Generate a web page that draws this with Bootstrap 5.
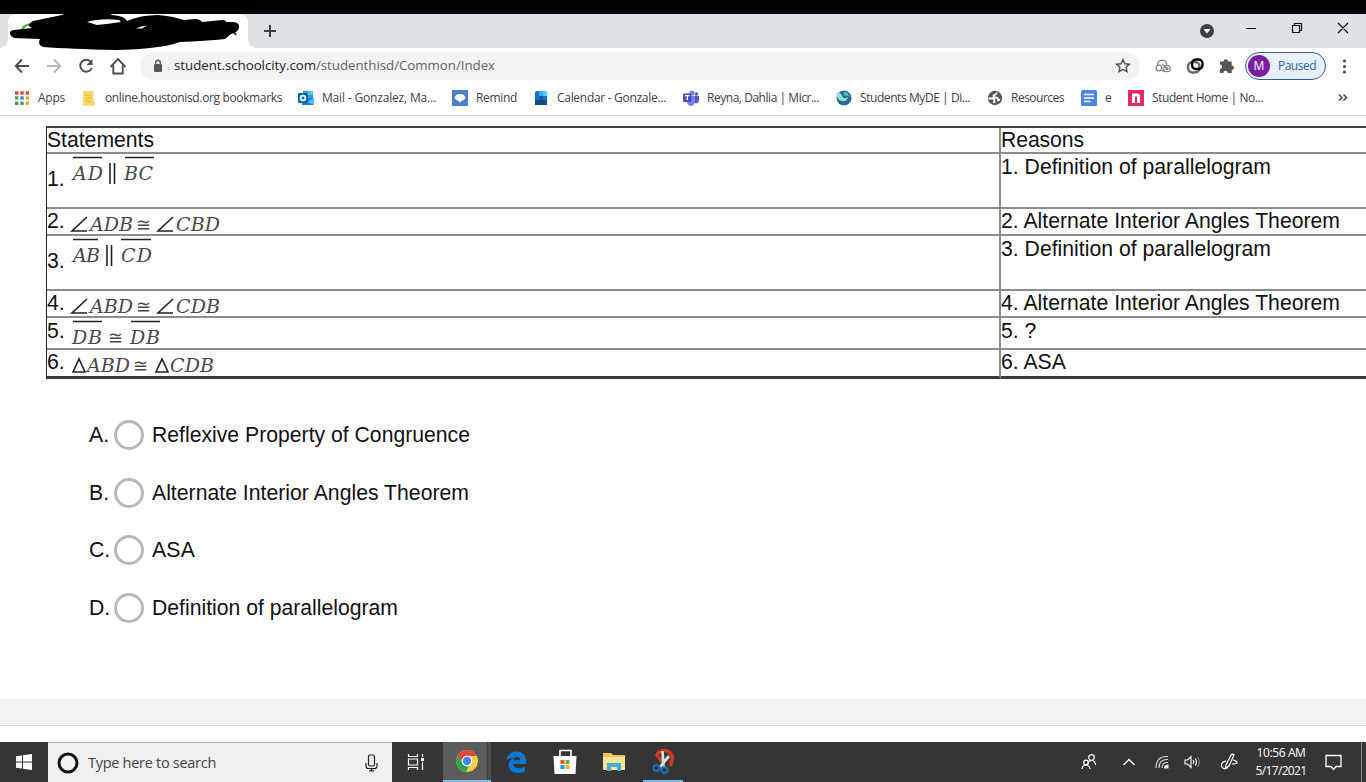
<!DOCTYPE html>
<html lang="en">
<head>
<meta charset="utf-8">
<title>Student Assessment</title>
<link href="https://cdn.jsdelivr.net/npm/bootstrap@5.3.0/dist/css/bootstrap.min.css" rel="stylesheet">
<style>
body{width:1366px;height:782px;overflow:hidden;background:#fff;font-family:"Open Sans","Noto Sans",sans-serif;color:#3c4043}
svg{display:block;flex:none}
[data-w]{white-space:nowrap;display:inline-block}
.topband{height:14px;background:#000}
.tabstrip{height:34px;background:#dee1e6}
.tab-active{width:240px;height:34px;margin-left:8px;background:#fff;border-radius:8px 8px 0 0}
.tab-active::before,.tab-active::after{content:"";position:absolute;bottom:0;width:8px;height:8px}
.tab-active::before{left:-8px;background:radial-gradient(circle at 0 0,transparent 7.5px,#fff 8px)}
.tab-active::after{right:-8px;background:radial-gradient(circle at 100% 0,transparent 7.5px,#fff 8px)}
.scribble{position:absolute;left:-8px;top:-4px;z-index:2}
.tools{height:36px}
.omni{width:1000px;height:28px;border-radius:14px;background:#f1f3f4;font-size:13.3px;margin-left:12px}
.host{color:#202124}.path{color:#5f6368}
.profile{width:81px;height:28px;border:1px solid #33609f;border-radius:14px;background:#e8f0fe;color:#2f62ad;font-size:12px}
.avatar{width:22px;height:22px;border-radius:50%;background:#7b1fa2;color:#fff;font-size:12px;margin-left:2px;margin-right:8px}
.marks{height:32px;border-bottom:1px solid #d5d7da;font-size:12px;padding-left:14px}
.bm{height:27px;gap:8px;line-height:16px}
.bm svg{width:16px;height:16px}
.page{height:583px;padding-top:10px;font-family:"Liberation Sans",Arial,sans-serif;font-size:21.2px;color:#111}
.proof{width:1340px;margin-left:46px;table-layout:fixed;border-collapse:separate;border-spacing:0;border-left:1px solid #222;border-top:2px solid #444}
.proof td{padding:0;border-bottom:2px solid #8c8c8c;vertical-align:top;line-height:25px;height:27px}
.proof td:first-child{border-right:2px solid #8c8c8c}
.proof tr:last-child td{border-bottom:3px solid #3a3a3a}
.proof .r1 td{height:26px;line-height:24px}.proof .r2 td{height:55px}.proof .r3 td{height:27px;line-height:23px}.proof .r4 td{height:32px}.proof .r5 td{height:29px;line-height:23px}
.num{width:24px;flex:none}
.r2 .num{padding-top:12px}
.math{font-family:"DejaVu Serif","Liberation Serif",serif;font-style:italic;font-size:19px;fill:#484848;overflow:visible}
.math .sym{font-family:"DejaVu Sans",sans-serif;font-style:normal;font-size:18px}
.math path{stroke:#222;stroke-width:1.6;fill:none}
.choices{padding-left:89px;padding-top:27px}
.choice{height:57.7px}
.letter{width:25px}
.choice .form-check-input{width:30px;height:30px;border:3px solid #b9b9b9;margin:0 8px 0 0;float:none;background:#fff}
.footband{height:27px;background:#f3f3f3;border-bottom:1px solid #dadada}
.gap-white{height:16px}
.taskbar{height:40px;background:#353535;color:#fff}
.taskbar .seg{height:40px;display:flex;align-items:center;justify-content:center;flex:none}
.searchbox{width:344px;height:40px;background:#f0f0f0;border-top:1px solid #b5b5b5;color:#444;font-size:14.5px}
.chrome-on{width:48px;margin-left:3px;background:linear-gradient(90deg,#5c5c5c 44px,#3e3e3e 44px,#3e3e3e 45px,#505050 45px);border-bottom:2px solid #76b9ed}
.snip-on{position:relative}
.snip-on::after{content:"";position:absolute;left:4px;right:4px;bottom:0;height:2px;background:#76b9ed}
.clock{font-size:12px;line-height:18px}
</style>
</head>
<body>
<div class="topband"></div>
<header>
 <div class="tabstrip d-flex">
  <div class="tab-active position-relative">
   <svg class="scribble" width="256" height="40" viewBox="0 10 256 40"><path d="M22 32c0-5 4-8 9-7" stroke="#58b947" stroke-width="2.5" fill="none"/><path d="M233 31l3 4" stroke="#333" stroke-width="2"/>
    <path d="M14 30L32 28Q25 25 33 21L62 15L68 12L108 12L112 15Q125 16 127 21Q140 15 158 15Q172 16 184 20L195 19Q200 19 202 22L222 20Q226 20 226 22L234 22Q240 23 239 28Q238 32 231 34L225 39Q205 41 180 42Q160 49 115 50Q70 49 43 47Q37 44 40 39L14 38Q9 35 10 32Q11 30 14 30Z" fill="#000"/>
    <path d="M87 22Q100 18 119 20L121 22Q108 24 97 25Z" fill="#fff"/><path d="M136 28.500Q141 26 147 25.500L142 28.500Z" fill="#fff"/></svg>
  </div>
  <svg width="14" height="34" viewBox="0 0 14 34" style="margin-left:15px"><path d="M7 11v12M1 17h12" stroke="#3c4043" stroke-width="2"/></svg>
  <div class="ms-auto d-flex">
   <svg width="167" height="34" viewBox="1199 14 167 34" fill="none"><circle cx="1207" cy="31" r="7" fill="#3c4043"/><path d="M1203.500 29h7l-3.500 4.500z" fill="#fff"/><path d="M1246 28.500h10" stroke="#111"/><path d="M1292.500 25.500h7v7h-7zM1294.500 25v-1.500h7v7H1300M1338 23l10 10M1348 23l-10 10" stroke="#111" stroke-width="1.200"/></svg>
  </div>
 </div>
 <div class="tools d-flex align-items-center">
  <svg width="128" height="36" viewBox="0 48 128 36" fill="none" stroke="#4a4d51" stroke-width="1.900"><path d="M29 66H16M22 59.500L15.700 66L22 72.500"/><path d="M47 66h13M54 59.500l6.300 6.500l-6.300 6.500" stroke="#b6b8bb"/><path d="M91 62A6 6 0 1 0 91.800 68"/><path d="M92.500 59v6h-6z" fill="#4a4d51" stroke="none"/><path d="M110.500 67L118 59.200L125.500 67M113.300 65.500v8h9.400v-8"/></svg>
  <div class="omni d-flex align-items-center">
   <svg width="10" height="14" viewBox="0 0 10 14" fill="#54575b" style="margin-right:11px;margin-left:13px"><rect x="1" y="5" width="8" height="8" rx="1"/><path d="M2.700 6V3.500a2.300 2.300 0 0 1 4.600 0V6" fill="none" stroke="#54575b" stroke-width="1.400"/></svg>
   <span data-w="321"><span class="host">student.schoolcity.com</span><span class="path">/studenthisd/Common/Index</span></span>
   <svg class="ms-auto" style="margin-right:9px" width="16" height="16" viewBox="0 0 16 16"><path d="M8 1.700l1.900 4.100 4.500.5-3.300 3 .9 4.400L8 11.500l-4 2.200.9-4.400-3.300-3 4.500-.5z" fill="none" stroke="#4a4d51" stroke-width="1.400"/></svg>
  </div>
  <svg width="105" height="36" viewBox="1140 48 105 36" fill="none"><g stroke="#85888b" stroke-width="1.300"><circle cx="1159" cy="68" r="2.800"/><circle cx="1167" cy="68.500" r="3.200"/><circle cx="1167" cy="68.500" r="1"/><path d="M1157.500 65.500q0-5 4.500-5.300q5 0 4.500 5M1162.500 64l4 4M1161.500 70l3 2"/></g><g stroke-width="2.400"><rect x="1188" y="62" width="11.500" height="10.500" rx="4.500" stroke="#666"/><rect x="1192" y="59.500" width="10.500" height="9.500" rx="4" stroke="#000"/></g><path d="M1220 62.500h3.500a2.300 2.300 0 0 1 4.600 0h3.600v4a2.200 2.200 0 0 1 0 4.400v3h-4a2.200 2.200 0 0 0-4.400 0h-3.400v-4a2.200 2.200 0 0 0 0-4.400z" fill="#54575b" transform="translate(0 -1)"/></svg>
  <div class="profile d-flex align-items-center"><span class="avatar d-flex align-items-center justify-content-center">M</span><span data-w="38">Paused</span></div>
  <svg width="40" height="36" viewBox="1326 48 40 36" fill="#4a4d51"><circle cx="1344.500" cy="61" r="1.600"/><circle cx="1344.500" cy="66.500" r="1.600"/><circle cx="1344.500" cy="72" r="1.600"/></svg>
 </div>
 <nav class="marks d-flex">
  <div class="bm d-flex align-items-center" style="width:68px"><svg viewBox="0 0 16 16"><path d="M1 3h14" stroke="#d84a3b" stroke-width="3.400" stroke-dasharray="3.400 1.900"/><path d="M1 8h3.400" stroke="#4ca35a" stroke-width="3.400"/><path d="M6.300 8h3.400" stroke="#3c80e0" stroke-width="3.400"/><path d="M11.600 8H15" stroke="#e9a928" stroke-width="3.400"/><path d="M1 13.200h8.700" stroke="#3f9f55" stroke-width="3.400" stroke-dasharray="3.400 1.900"/><path d="M11.600 13.200H15" stroke="#e9a928" stroke-width="3.400"/></svg><span data-w="27">Apps</span></div>
  <div class="bm d-flex align-items-center" style="width:216px"><svg viewBox="0 0 16 16"><path d="M1 1h10.500V12H13v3.500H1z" fill="#f7d867"/><path d="M3 5h7M3 8h7M3 11h7" stroke="#e5b83b"/></svg><span data-w="177" style="margin-left:-1px">online.houstonisd.org bookmarks</span></div>
  <div class="bm d-flex align-items-center" style="width:154px"><svg viewBox="0 0 16 16"><path d="M5 1h10v7H5z" fill="#2b9ce6"/><path d="M10 1h5v4h-5z" fill="#53c8f5"/><path d="M4 8h12v7H4z" fill="#1684d5"/><path d="M16 8l-7 4 7 3z" fill="#50bdf0"/><rect y="3" width="10" height="10" rx="1" fill="#0863ae"/><circle cx="5" cy="8" r="2.400" fill="none" stroke="#fff" stroke-width="1.600"/></svg><span data-w="114">Mail - Gonzalez, Ma...</span></div>
  <div class="bm d-flex align-items-center" style="width:81px"><svg viewBox="0 0 16 16"><path d="M0 0h16v16H0z" fill="#4a80cc"/><ellipse cx="8" cy="7.500" rx="5.300" ry="3.500" fill="#fff"/><path d="M5 9h5l-2 4z" fill="#fff"/></svg><span data-w="41">Remind</span></div>
  <div class="bm d-flex align-items-center" style="width:150px"><svg viewBox="0 0 16 16"><rect x="2" y="1" width="12" height="14" rx="1.500" fill="#1475c9"/><path d="M6 1h8v5H6z" fill="#32aeee"/><path d="M10 1h4v5h-4z" fill="#4fd0ff"/><path d="M2 10h12v5H2z" fill="#174b87"/><path d="M6 6h4v4H6z" fill="#125ea9"/></svg><span data-w="109">Calendar - Gonzale...</span></div>
  <div class="bm d-flex align-items-center" style="width:153px"><svg viewBox="0 0 16 16"><circle cx="9" cy="3" r="2.600" fill="#7b83eb"/><circle cx="13.500" cy="4" r="1.700" fill="#5059c9"/><path d="M11 6h5v5q-1 3-4 2z" fill="#5059c9"/><path d="M4 6h8v6q-1 4-4 4t-4-4z" fill="#7b83eb"/><rect y="3.500" width="8.500" height="8.500" rx="1" fill="#464eb8"/><path d="M2 5.700h4.500M4.250 5.700V10" stroke="#fff" stroke-width="1.300"/></svg><span data-w="112">Reyna, Dahlia | Micr...</span></div>
  <div class="bm d-flex align-items-center" style="width:151px"><svg viewBox="0 0 16 16"><circle cx="8" cy="8" r="7.500" fill="#246c9a"/><path d="M0 3q5-1 6 3q2 4 6 1q-1 5-6 4Q1 10 0 3z" fill="#8de0d0"/><path d="M8 2q5 0 5 5q-3-3-5-1z" fill="#55b9c4"/></svg><span data-w="110">Students MyDE | Di...</span></div>
  <div class="bm d-flex align-items-center" style="width:94px"><svg viewBox="0 0 16 16"><circle cx="8" cy="8" r="7.200" fill="#54575b"/><path d="M10 2.500Q9 5 6.500 5.500Q6 7.500 9 7.500Q11.500 8 11 10H13M1.500 8.500h4q2 0 2 2v1.500h-1.500" fill="none" stroke="#fff" stroke-width="1.800"/></svg><span data-w="53">Resources</span></div>
  <div class="bm d-flex align-items-center" style="width:47px"><svg viewBox="0 0 16 16"><rect width="16" height="16" rx="1.500" fill="#4c84e8"/><path d="M3 4.500h10M3 8h10M3 11.500h6.500" stroke="#fff" stroke-width="1.700"/></svg><span data-w="6">e</span></div>
  <div class="bm d-flex align-items-center"><svg viewBox="0 0 16 16"><path d="M0 0h16v16H0z" fill="#df2b66"/><path d="M4 3.500h5.500q2.500 0 2.500 2.500v7H9V6.500H7V13H4z" fill="#fff"/></svg><span data-w="111">Student Home | No...</span></div>
  <svg class="ms-auto" style="margin-right:18px" width="10" height="27" viewBox="0 0 10 27"><path d="M1 10.500l3 3-3 3M5.500 10.500l3 3-3 3" fill="none" stroke="#4a4d51" stroke-width="1.600"/></svg>
 </nav>
</header>
<main class="page">
 <table class="proof">
  <colgroup><col style="width:954px"><col></colgroup>
  <tbody>
  <tr class="r1"><td><span data-w="107">Statements</span></td><td><span data-w="83">Reasons</span></td></tr>
  <tr class="r2"><td><div class="d-flex"><span class="num">1.</span>
   <svg class="math" width="160" height="50" viewBox="71 154 160 50"><path d="M73 157.500h29M125 157.500h29M110 163v21M114.500 163v21"/><text x="73" y="179.500" textLength="30">AD</text><text x="124" y="179.500" textLength="29">BC</text></svg></div></td><td><span data-w="270">1. Definition of parallelogram</span></td></tr>
  <tr class="r3"><td><div class="d-flex"><span class="num">2.</span>
   <svg class="math" width="160" height="25" viewBox="71 209 160 25"><path d="M87 217L72 231h15M173 217l-15 14h15" stroke-width="1.300"/><text x="90" y="231" textLength="43">ADB</text><text x="136" y="231" class="sym">≅</text><text x="176" y="231" textLength="44">CBD</text></svg></div></td><td><span data-w="339">2. Alternate Interior Angles Theorem</span></td></tr>
  <tr class="r2"><td><div class="d-flex"><span class="num">3.</span>
   <svg class="math" width="160" height="50" viewBox="71 236 160 50"><path d="M73 239.500h25M121 239.500h30M107 245v21M111.500 245v21"/><text x="73" y="261.500" textLength="27">AB</text><text x="121" y="261.500" textLength="31">CD</text></svg></div></td><td><span data-w="270">3. Definition of parallelogram</span></td></tr>
  <tr class="r3"><td><div class="d-flex"><span class="num">4.</span>
   <svg class="math" width="160" height="25" viewBox="71 291 160 25"><path d="M87 299L72 313h15M173 299l-15 14h15" stroke-width="1.300"/><text x="90" y="313" textLength="43">ABD</text><text x="136" y="313" class="sym">≅</text><text x="176" y="313" textLength="44">CDB</text></svg></div></td><td><span data-w="339">4. Alternate Interior Angles Theorem</span></td></tr>
  <tr class="r4"><td><div class="d-flex"><span class="num">5.</span>
   <svg class="math" width="160" height="29" viewBox="71 318 160 29"><path d="M73 321.500h29M131 321.500h29"/><text x="72" y="343.500" textLength="30">DB</text><text x="108" y="343.500" class="sym">≅</text><text x="130" y="343.500" textLength="30">DB</text></svg></div></td><td>5. ?</td></tr>
  <tr class="r5"><td><div class="d-flex"><span class="num">6.</span>
   <svg class="math" width="160" height="25" viewBox="71 350 160 25"><path d="M73 372h12L79 359zM156 372h12l-6-13z" stroke-width="1.300"/><text x="87" y="372" textLength="43">ABD</text><text x="133" y="372" class="sym">≅</text><text x="170" y="372" textLength="44">CDB</text></svg></div></td><td>6. ASA</td></tr>
  </tbody>
 </table>
 <div class="choices">
  <label class="choice d-flex align-items-center"><span class="letter">A.</span><input class="form-check-input" type="radio" name="answer"><span data-w="318">Reflexive Property of Congruence</span></label>
  <label class="choice d-flex align-items-center"><span class="letter">B.</span><input class="form-check-input" type="radio" name="answer"><span data-w="317">Alternate Interior Angles Theorem</span></label>
  <label class="choice d-flex align-items-center"><span class="letter">C.</span><input class="form-check-input" type="radio" name="answer"><span data-w="43">ASA</span></label>
  <label class="choice d-flex align-items-center"><span class="letter">D.</span><input class="form-check-input" type="radio" name="answer"><span data-w="246">Definition of parallelogram</span></label>
 </div>
</main>
<div class="footband"></div><div class="gap-white"></div>
<footer class="taskbar d-flex">
 <div class="seg" style="width:48px"><svg width="16" height="16" viewBox="0 0 16 16" fill="#fff"><path d="M0 2.300L6 1.500v6H0zM7 1.300L16 0v7.500H7zM0 8.500h6v6L0 13.700zM7 8.500h9V16l-9-1.300z"/></svg></div>
 <div class="searchbox d-flex align-items-center">
  <svg width="22" height="22" viewBox="0 0 22 22" style="margin-left:9px;margin-right:9px"><circle cx="11" cy="11" r="9" fill="none" stroke="#111" stroke-width="3"/></svg>
  <span data-w="128">Type here to search</span>
  <svg class="ms-auto" style="margin-right:14px" width="13" height="18" viewBox="0 0 13 18" fill="none" stroke="#222" stroke-width="1.200"><rect x="3.500" y="1" width="6" height="11" rx="1.500"/><path d="M1 9v3q0 2.500 2.500 2.500h6Q12 14.500 12 12V9M6.500 14.500V17M4 16.800h5"/></svg>
 </div>
 <div class="seg" style="width:48px"><svg width="18" height="16" viewBox="0 0 18 16" fill="none" stroke="#fff" stroke-width="1.200"><path d="M1.500 0v2.500h9V0M1.500 16v-2.500h9V16M1.500 5h9v6h-9zM15.500 0v3M15.500 8v8"/><path d="M14 5.500h3" stroke-width="3"/></svg></div>
 <div class="seg chrome-on"><svg width="24" height="24" viewBox="0 0 24 24"><circle cx="12" cy="12" r="11" fill="#f9cf45"/><path d="M2.500 6.500A11 11 0 0 1 21.800 7H12a5 5 0 0 0-4.500 7z" fill="#df4b3f"/><path d="M2.500 6.500L7.700 14.500A5 5 0 0 0 14 16.600L11.200 23A11 11 0 0 1 2.500 6.500z" fill="#2da653"/><circle cx="12" cy="12" r="5.300" fill="#fff"/><circle cx="12" cy="12" r="4.200" fill="#4386ee"/></svg></div>
 <div class="seg" style="width:50px"><svg width="22" height="22" viewBox="0 0 22 22"><path d="M1 10C2 4 6 0.500 11.500 0.500C18 0.500 21 5 21 10v3H8c.5 5 7 5.500 12 2.500v4.800C13 23.500 4 22 3.500 14.500C3.500 11 5.500 8 9 6.500C5 7 2.500 8 1 10zM8.200 9.300h7c0-5-6.500-4.500-7 0z" fill="#0b79d4"/></svg></div>
 <div class="seg" style="width:48px"><svg width="24" height="26" viewBox="0 0 24 26"><path d="M7 8V1.500h11V8" fill="none" stroke="#fff" stroke-width="1.600"/><path d="M.500 7h23l-1 18h-21z" fill="#fff"/><path d="M7.500 11h4v4h-4z" fill="#e2522b"/><path d="M12.500 11h4v4h-4z" fill="#73ad26"/><path d="M7.500 16h4v4h-4z" fill="#189de0"/><path d="M12.500 16h4v4h-4z" fill="#f2b21b"/></svg></div>
 <div class="seg" style="width:50px"><svg width="22" height="20" viewBox="0 0 22 20"><path d="M0 1h8l2 2h12v15H0z" fill="#edc657"/><path d="M0 5h22v13H0z" fill="#fae49a"/><path d="M4 19v-8h14v8h-4v-4H8v4z" fill="#45add8"/></svg></div>
 <div class="seg snip-on" style="width:48px"><svg width="22" height="26" viewBox="0 0 22 26" fill="none"><path d="M5 5Q11-1 17 3t1 14" stroke="#cf3a22" stroke-width="3.500"/><path d="M4 5l6 8" stroke="#cf3a22" stroke-width="3"/><path d="M10.500 2l1 16M17 7L8 18" stroke="#ddd" stroke-width="2.800"/><circle cx="4.500" cy="19" r="3" stroke="#1a71bd" stroke-width="2"/><circle cx="12.500" cy="21" r="3" stroke="#1a71bd" stroke-width="2"/></svg></div>
 <div class="d-flex ms-auto">
  <div class="seg" style="width:38px"><svg width="16" height="18" viewBox="0 0 16 18" fill="none" stroke="#fff" stroke-width="1.200"><circle cx="10.500" cy="4.500" r="2.800"/><path d="M7 11q0-3.500 3.500-3.500T14.500 12"/><circle cx="5" cy="9.500" r="2.300"/><path d="M1 16q.5-4 4-4t4 4"/></svg></div>
  <div class="seg" style="width:42px"><svg width="12" height="8" viewBox="0 0 12 8"><path d="M.500 7L6 1.500 11.500 7" fill="none" stroke="#fff" stroke-width="1.300"/></svg></div>
  <div class="seg" style="width:24px"><svg width="14" height="16" viewBox="0 0 14 16" fill="none" stroke="#ddd" stroke-width="1.100"><path d="M1 14Q1 2 13 2.500M4 14Q4 5 13 5.500M7 14Q7 8 13 8.500"/><path d="M9.500 14q0-3 3.500-3v3z" fill="#fff"/></svg></div>
  <div class="seg" style="width:36px"><svg width="17" height="14" viewBox="0 0 17 14" fill="none" stroke="#fff" stroke-width="1.100"><path d="M1 5h2.500L7 1.500v11L3.500 9H1zM9 5q1.500 2 0 4M11.200 3.500q2.500 3.500 0 7"/><path d="M13.500 2q3.500 5 0 10" stroke="#888"/></svg></div>
  <div class="seg" style="width:38px"><svg width="18" height="18" viewBox="0 0 18 18" fill="none" stroke="#fff" stroke-width="1.200"><path d="M6 12L11 2q1.500-1.500 3 0L9 13l-3.500 2.500zM6 8Q1 9 1.500 13q1.500 4 6 2M13 7q4 1 4 2.500T12 11"/></svg></div>
  <div class="seg clock flex-column" style="width:66px"><span data-w="49">10:56 AM</span><span data-w="51">5/17/2021</span></div>
  <div class="seg" style="width:38px"><svg width="17" height="17" viewBox="0 0 17 17"><path d="M1 1.500h15v11h-5l-2.500 3-2.500-3H1z" fill="none" stroke="#fff" stroke-width="1.300"/></svg></div>
  <div class="seg" style="width:14px"><svg width="14" height="40"><path d="M9.500 0v40" stroke="#8a8a8a"/></svg></div>
 </div>
</footer>
<script src="https://cdn.jsdelivr.net/npm/bootstrap@5.3.0/dist/js/bootstrap.bundle.min.js"></script>
<script>
// Tracks each label so that it fills its data-w width.
document.querySelectorAll('[data-w]').forEach(function (el) {
  var n = el.textContent.length;
  var w = el.getBoundingClientRect().width;
  el.style.letterSpacing = ((+el.dataset.w - w) / n) + 'px';
});
</script>
</body>
</html>
